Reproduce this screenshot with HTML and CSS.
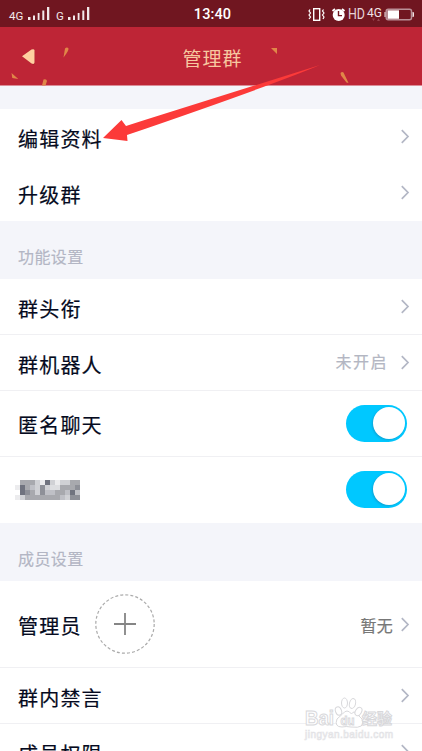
FILE: index.html
```html
<!DOCTYPE html>
<html lang="zh-CN">
<head>
<meta charset="utf-8">
<title>管理群</title>
<link rel="stylesheet" href="styles.css">
</head>
<body>
<svg class="defs" width="0" height="0" aria-hidden="true">
  <symbol id="chevron" viewBox="0 0 10 15"><path d="M1.800 1.200 8 7.500 1.800 13.800" fill="none" stroke="#b3b7c5" stroke-width="1.700"/></symbol>
  <symbol id="signal" viewBox="0 0 22 14"><path d="M0 10h2.500v3H0zM5 8.500h2V13H5zM9.700 6h1.800v7H9.700zM14.300 3.500h2V13h-2zM19 0h2.300v13H19z" fill="#f2e8e9"/></symbol>
</svg>
<div class="screen">
  <div class="status">
    <div class="status-left">
      <span>4G</span><svg class="signal"><use href="#signal"/></svg>
      <span class="second">G</span><svg class="signal"><use href="#signal"/></svg>
    </div>
    <div class="clock">13:40</div>
    <svg class="status-icons" viewBox="0 0 114 27">
      <g fill="none" stroke="#fff" stroke-width="1.400">
        <rect x="5.700" y="7.700" width="6" height="11.600"/>
        <path d="M2 8.500 1 10l1.500 2L1 14l1.500 2L1 18M15.500 8.500l-1 1.500 1.500 2-1.500 2 1.500 2-1 2" stroke-width="1.200"/>
        <path d="m24.500 10 2.500-2M36.500 10 34 8" stroke-width="1.900"/>
      </g>
      <circle cx="30.700" cy="14" r="6" fill="#fff"/>
      <path d="M30.500 10v4.600H34" fill="none" stroke="#701620" stroke-width="1.400"/>
      <text x="40" y="18.300" class="hd" textLength="17" lengthAdjust="spacingAndGlyphs">HD</text>
      <text x="59" y="15.500" class="net">4G</text>
      <path d="M64 17.500h3L65.500 20zM69 20h3l-1.500-2.500z" fill="#94434c"/>
      <rect x="78.200" y="8.200" width="25.300" height="10.600" rx="2" fill="none" stroke="#b99097" stroke-width="1.500"/>
      <path d="M79.500 9.300H91v8.500H79.500z" fill="#fff"/>
      <path d="M104.500 11h.5q1 0 1 1v3q0 1-1 1h-.5zM76.500 11h1v5h-1z" fill="#f0e3e5"/>
    </svg>
  </div>
  <header class="header">
    <svg class="confetti" viewBox="0 0 422 59">
      <path d="m23 29.800 9.500-6.500q2-1 2 1v12q0 2-2 1z" fill="#8f1a26" opacity=".6"/>
      <path d="m22 29.300 9.500-6.800q2.800-1 3 1v12q-.2 2.200-3 1z" fill="#ffd0a0"/>
      <g fill="#e08748">
        <path d="m63.500 30.500 1.500-9q2-1.800 3.500 0 .5 2-5 9z"/>
        <path d="m11.500 46 6.800 6-6-1zM42 58.500l1.500-6q3-1 3.500 1.500l-1.500 4.500z"/>
        <path d="M271 21h6v6zM340.500 46q1.500-1.500 3-.5l5 10.500-2-.5-5.500-7z"/>
      </g>
    </svg>
    <h1>管理群</h1>
  </header>
  <main>
    <section class="group first">
      <div class="row plain"><span class="label">编辑资料</span><svg class="chevron"><use href="#chevron"/></svg></div>
      <div class="row plain"><span class="label">升级群</span><svg class="chevron"><use href="#chevron"/></svg></div>
    </section>
    <h2>功能设置</h2>
    <section class="group">
      <div class="row"><span class="label">群头衔</span><svg class="chevron"><use href="#chevron"/></svg></div>
      <div class="row"><span class="label">群机器人</span><span class="value">未开启</span><svg class="chevron"><use href="#chevron"/></svg></div>
      <div class="row tall"><span class="label">匿名聊天</span><span class="toggle"></span></div>
      <div class="row tall last">
        <svg class="mosaic" viewBox="0 0 13 4" shape-rendering="crispEdges">
          <path fill="#a8a9ae" d="M1 0h12v4H1z"/>
          <path fill="#ececee" d="M0 1h1v1H0zM0 3h1v1H0zM5 0h1v1H5zM8 0h1v1H8z"/>
          <path fill="#d0d1d5" d="M4 0h1v1H4zM7 0h1v1H7zM9 0h2v1H9zM4 1h1v2H4zM6 1h1v1H6zM1 3h1v1H1zM10 3h1v1h-1z"/>
          <path fill="#bfc0c6" d="M3 1h1v1H3zM6 2h2v1H6zM9 3h1v1H9zM10 2h1v1h-1zM12 2h1v1h-1z"/>
          <path fill="#8e9098" d="M5 1h1v2H5zM2 2h1v1H2zM11 3h1v1h-1zM12 1h1v1h-1zM12 3h1v1h-1z"/>
          <path fill="#70737f" d="M1 1h1v2H1zM6 0h1v1H6zM11 2h1v1h-1z"/>
          <path fill="#dddee1" d="M7 1h2v1H7z"/>
        </svg>
        <span class="toggle"></span>
      </div>
    </section>
    <h2>成员设置</h2>
    <section class="group">
      <div class="row admins"><span class="label">管理员</span>
        <svg class="add" viewBox="0 0 60 60" fill="none"><circle cx="30" cy="30" r="29.200" stroke="#aaa" stroke-width="1.200" stroke-dasharray="3 2.100"/><path d="M19 30h22M30 19v22" stroke="#858585" stroke-width="1.800"/></svg>
        <span class="value dark">暂无</span><svg class="chevron"><use href="#chevron"/></svg></div>
      <div class="row"><span class="label">群内禁言</span><svg class="chevron"><use href="#chevron"/></svg></div>
      <div class="row"><span class="label">成员权限</span><svg class="chevron"><use href="#chevron"/></svg></div>
    </section>
  </main>
  <svg class="arrow" viewBox="0 0 422 751"><path d="m103 138 18.500-18 4.500 6Q250 87 320 65q-50 21-193 70l.5 6z" fill="#fc3a39"/></svg>
  <svg class="watermark" viewBox="0 0 96 54">
    <g fill="#fff" stroke="#d8d8db" stroke-width="1">
      <path d="M49.500 29Q45 23 40.500 29l-5.500 5q-3 8 5 8 4-1 9 0 15 2 11-8l-5-5q-3-4-5.500 0z" transform="translate(-1 -7)"/>
      <ellipse cx="35.500" cy="19" rx="3" ry="4.300" transform="rotate(-20 35.500 19)"/>
      <ellipse cx="41.500" cy="11" rx="3" ry="5"/>
      <ellipse cx="49.500" cy="11.500" rx="3" ry="5" transform="rotate(15 49.500 11.500)"/>
      <ellipse cx="55.500" cy="19.500" rx="3" ry="4.500" transform="rotate(30 55.500 19.500)"/>
      <text x="2" y="33" class="wm-logo" textLength="29" lengthAdjust="spacingAndGlyphs">Bai</text>
      <text x="37.500" y="33" class="wm-du" textLength="14" lengthAdjust="spacingAndGlyphs">du</text>
      <text x="59" y="32" class="wm-cn">经验</text>
    </g>
    <text x="2" y="45.500" class="wm-url" textLength="88">jingyan.baidu.com</text>
  </svg>
</div>
</body>
</html>
```
FILE: styles.css
```css
* { box-sizing: border-box; }
body { margin: 0; background: #fff; overflow: hidden; font-family: "Noto Sans CJK SC", sans-serif; }
.defs { position: absolute; }
.screen { position: relative; width: 422px; height: 751px; overflow: hidden; display: flex; flex-direction: column; background: #f4f5fa; }
.status { height: 27px; flex: none; display: grid; grid-template-columns: 1fr 60px 1fr; align-items: center; background: #701620; color: #fff; font-family: Roboto, sans-serif; }
.status-left { display: flex; align-items: center; padding: 1px 0 0 9px; font-size: 11.500px; line-height: 14px; color: #f2e8e9; }
.status-left span { width: 19px; padding-top: 2px; }
.status-left .second { width: 12px; margin-left: 6px; }
.signal { width: 22px; height: 14px; margin-top: -1px; }
.clock { text-align: center; font-size: 14.500px; font-weight: 500; line-height: 27px; letter-spacing: .1px; padding: 1px 0 0 3px; }
.status-icons { justify-self: end; width: 114px; height: 27px; }
.hd { font-size: 14px; fill: #e7d4d7; }
.net { font-size: 12px; fill: #f0e3e5; }
.header { position: relative; height: 59px; flex: none; background: #be2536; border-bottom: 1px solid #db8d98; }
.confetti { position: absolute; inset: 0; width: 422px; height: 59px; }
h1 { position: relative; margin: 0; text-align: center; color: #f7c8a0; font-size: 19px; line-height: 61px; font-weight: 400; letter-spacing: 1px; padding-left: 3px; }
main { flex: none; }
.group { background: #fff; }
.first { margin-top: 23px; }
.row { height: 56px; display: flex; align-items: center; padding: 2px 12px 0 18px; border-bottom: 1px solid #f0f0f3; }
.plain { border-bottom-color: transparent; }
.label { margin-top: 2px; font-size: 20px; line-height: 30px; letter-spacing: 1.200px; color: #050a20; -webkit-text-stroke: .2px #050a20; white-space: nowrap; }
.tall .label { margin-top: 0; }
.chevron { width: 10px; height: 15px; flex: none; margin: -2px 0 0 auto; }
.value { margin: -5px 0 0 auto; font-size: 16px; letter-spacing: 1.500px; color: #b3b6c2; -webkit-text-stroke: .2px #b3b6c2; }
.value + .chevron { margin-left: 12px; }
h2 { margin: 0; height: 58px; padding: 22px 18px 0; font-size: 16px; line-height: 26px; font-weight: 400; letter-spacing: .4px; color: #b3b6c4; -webkit-text-stroke: .15px #b3b6c4; }
.tall { height: 66px; padding-right: 15px; }
.last { border-bottom-color: #fff; }
.toggle { position: relative; width: 61px; height: 37px; border-radius: 19px; background: #00c8ff; margin: -3px 0 0 auto; flex: none; }
.toggle::after { content: ""; position: absolute; width: 32px; height: 32px; right: 2.500px; top: 2.500px; border-radius: 50%; background: #fff; box-shadow: -1px 1px 2px #168ebd99; }
.mosaic { width: 65px; height: 20px; margin: -2px 0 0 -3px; }
.admins { height: 87px; }
.add { width: 60px; height: 60px; margin: -2px 0 0 13px; }
.dark { margin-top: -1px; color: #777; letter-spacing: .3px; -webkit-text-stroke-color: #777; }
.value.dark + .chevron { margin-left: 7px; }
.arrow { position: absolute; inset: 0; width: 422px; height: 751px; }
.watermark { position: absolute; left: 303px; top: 692px; width: 96px; height: 54px; }
.wm-logo { font: bold 20px "Liberation Sans", sans-serif; }
.wm-du { font: bold 13px "Liberation Sans", sans-serif; }
.wm-cn { font-size: 15px; font-weight: 700; }
.wm-url { font: 10px "Liberation Sans", sans-serif; fill: #fff; stroke: #e3e3e6; stroke-width: .7px; }
```
